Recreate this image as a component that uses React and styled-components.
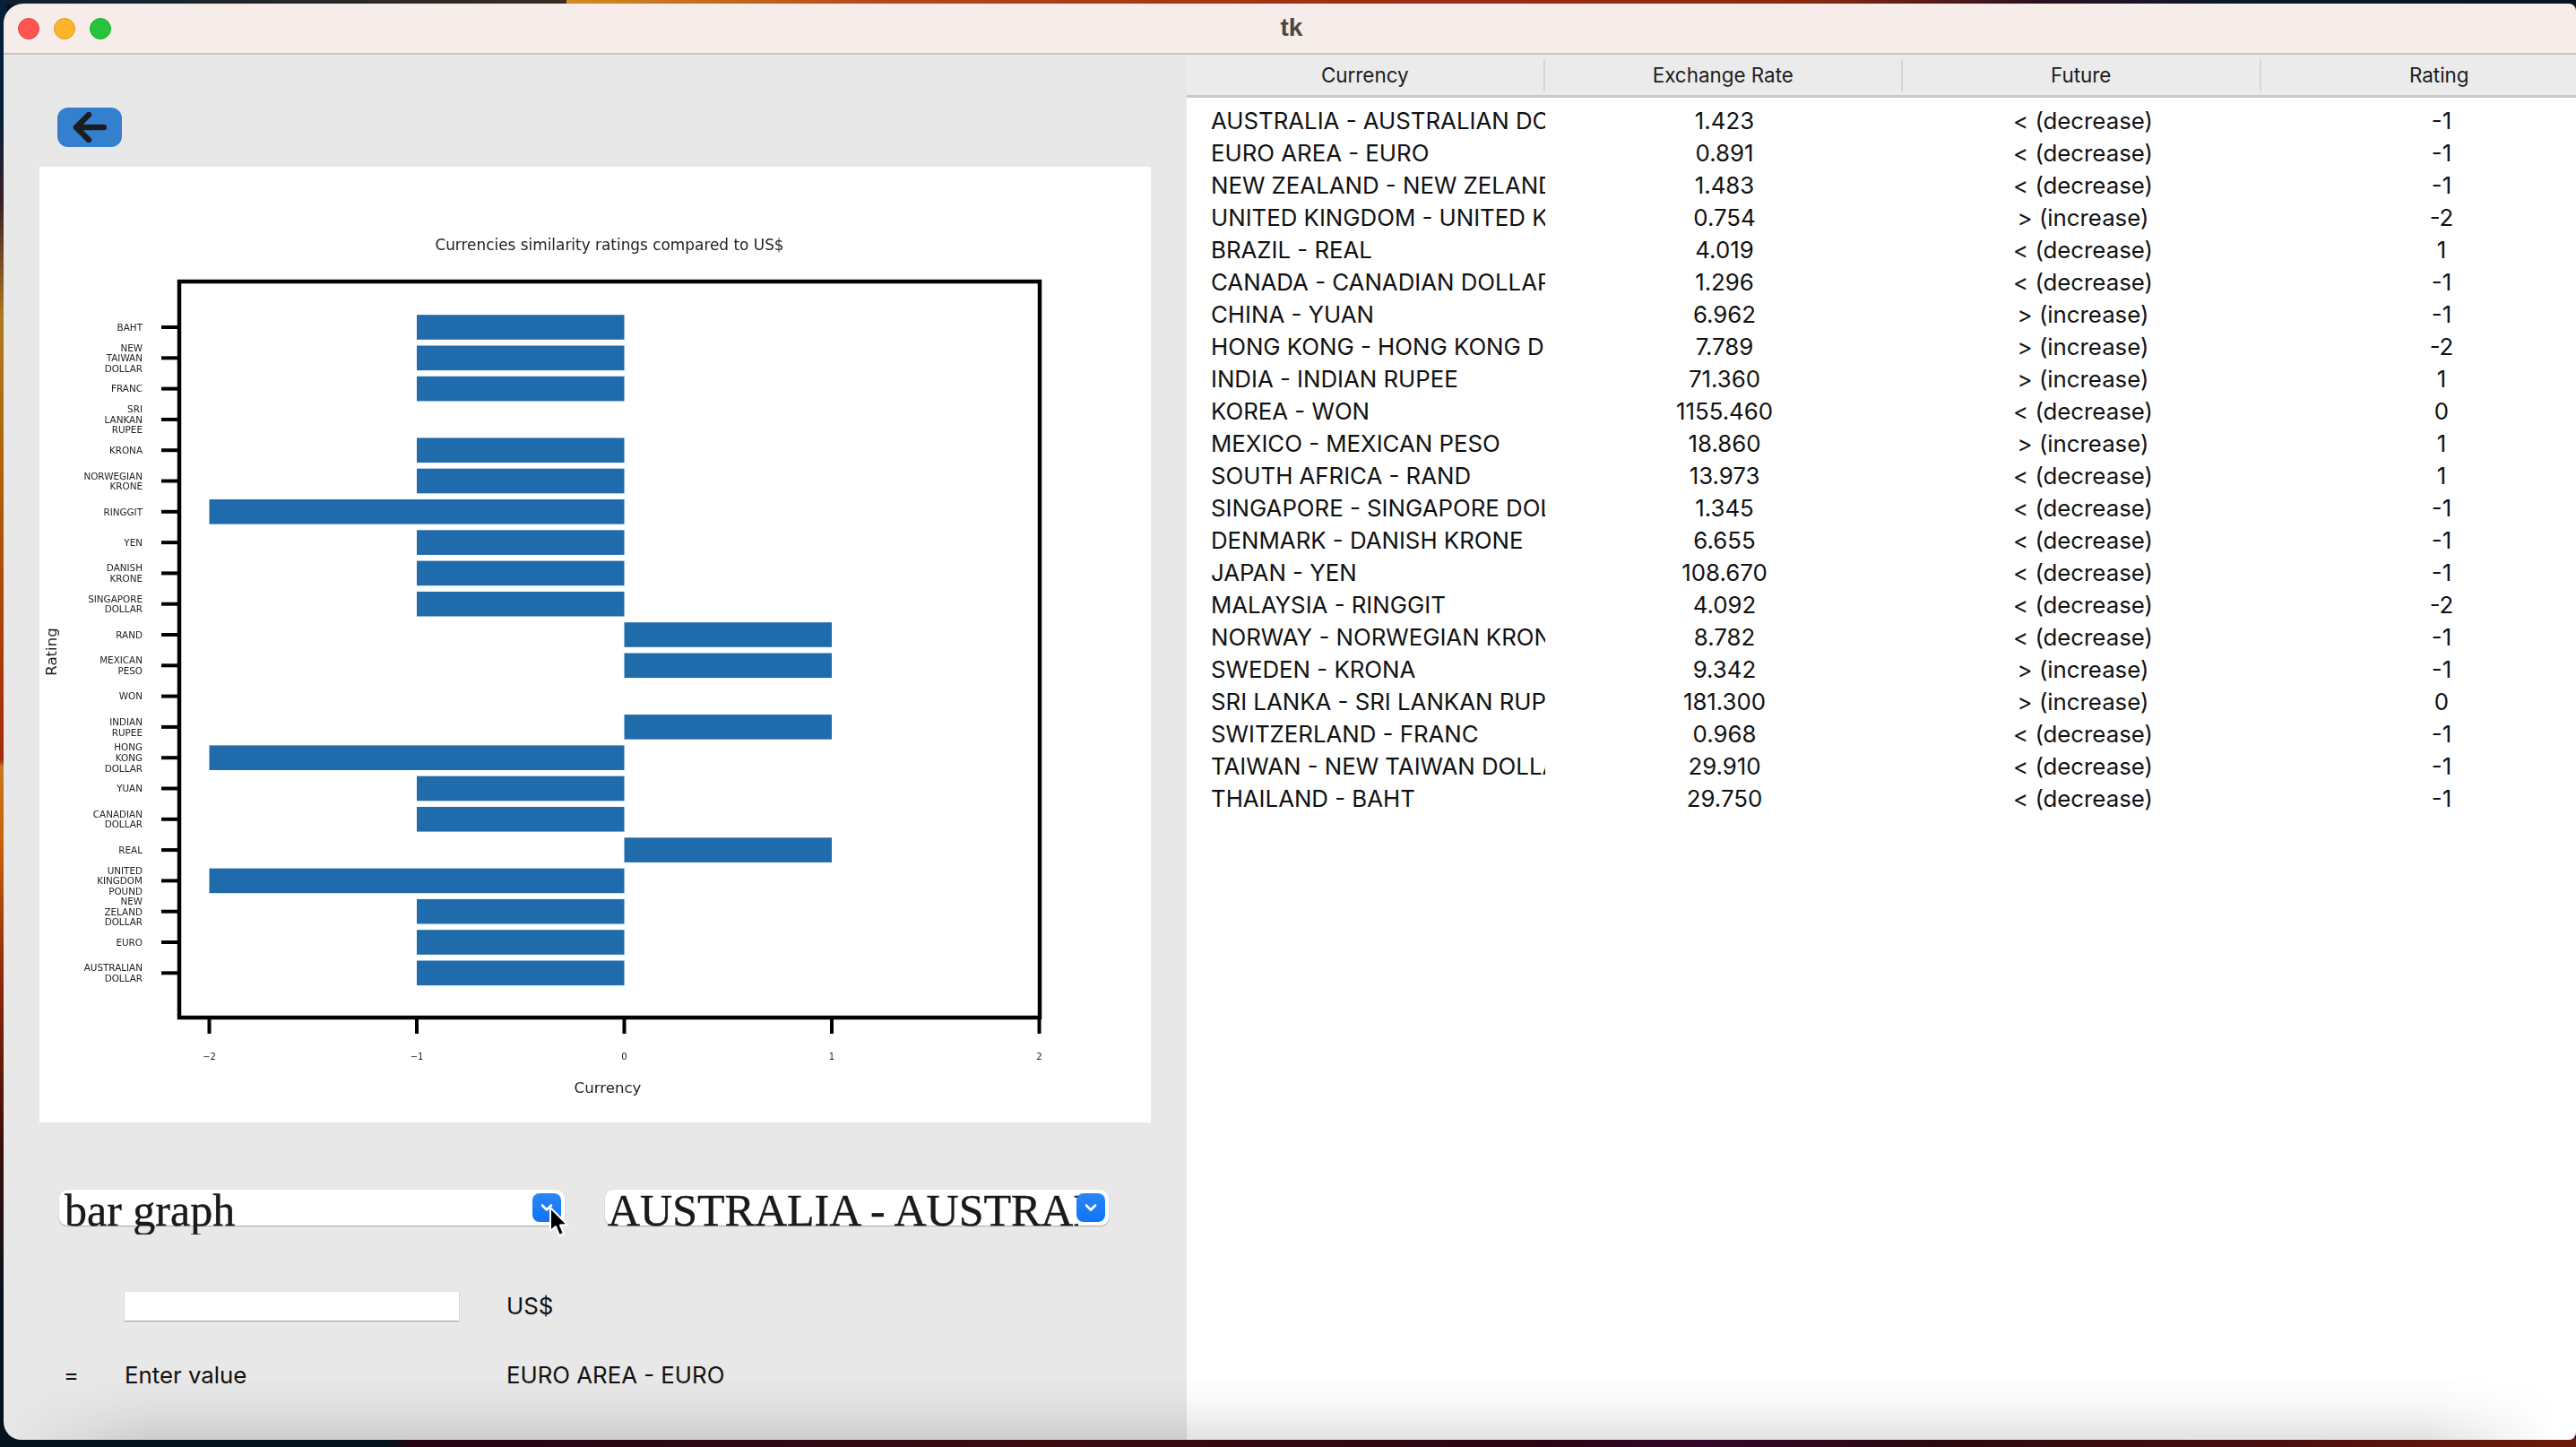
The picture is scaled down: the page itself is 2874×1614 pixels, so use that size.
import React from "react";
import styled, { createGlobalStyle } from "styled-components";

const Global = createGlobalStyle`
  html, body { margin: 0; padding: 0; width: 2874px; height: 1614px; overflow: hidden; }
  * { box-sizing: border-box; }
`;

const Desktop = styled.div`
  width: 2874px;
  height: 1614px;
  padding: 4px 0 8px 4px;
  background-color: #03141f;
  background-image:
    linear-gradient(90deg, #0c2030 0, #3a2b22 22%, #3a2b22 21.9%, #d28a22 22%, #b4481a 34%, #a02e12 52%, #8a2a12 70%, #2c1020 79%, #06182a 88%, #04141f 100%),
    linear-gradient(90deg, #03121b 0, #03121b 15%, #260412 16%, #2e0a16 30%, #3c0c12 40%, #2a0614 60%, #34082a 66%, #2a0a10 75%, #4a0e10 88%, #6e1c0a 100%),
    linear-gradient(180deg, #04203a 0, #06203a 8%, #3a2028 14%, #b07a20 22%, #b06408 32%, #a83008 50%, #a02c08 52.5%, #c87820 53%, #c86408 58%, #8c2808 68%, #3c0e0c 79%, #04141e 90%, #04141e 100%);
  background-size: 100% 5px, 100% 10px, 8px 100%;
  background-position: top left, bottom left, top left;
  background-repeat: no-repeat;
`;

const Window = styled.div`
  position: relative;
  width: 2870px;
  height: 1602px;
  display: flex;
  flex-direction: column;
  overflow: hidden;
  border-radius: 22px 8px 8px 20px;
  font-family: Inter, "Liberation Sans", Arial, sans-serif;
  color: #111;
`;

const TitleBar = styled.header`
  position: relative;
  flex: 0 0 57px;
  display: flex;
  align-items: center;
  justify-content: center;
  padding-bottom: 2px;
  background: #f6edeb;
  border-bottom: 2px solid #c6c4c3;
`;

const Lights = styled.div`
  position: absolute;
  left: 16px;
  top: 16px;
  display: flex;
  gap: 16px;
`;

const Light = styled.span`
  width: 24px;
  height: 24px;
  border-radius: 50%;
  background: ${(p) => p.$fill};
  border: 1px solid ${(p) => p.$edge};
`;

const Title = styled.span`
  margin-left: 4px;
  font-family: "Liberation Sans", Arial, sans-serif;
  font-size: 28px;
  font-weight: 700;
  color: #4a4644;
`;

const Body = styled.main`
  flex: 1;
  display: flex;
  min-height: 0;
`;

const LeftPanel = styled.section`
  flex: 0 0 1320px;
  background: #e8e8e8;
  display: flex;
  flex-direction: column;
`;

const BackButton = styled.button`
  width: 72px;
  height: 44px;
  margin: 59px 0 0 60px;
  padding: 0;
  border: 0;
  border-radius: 12px;
  background: #3480cf;
  display: flex;
  align-items: center;
  justify-content: center;
`;

const ChartFrame = styled.div`
  width: 1240px;
  height: 1066px;
  margin: 22px 0 0 40px;
  background: #fff;
`;

const ChartSvg = styled.svg`
  display: block;
  filter: blur(0.55px);
  font-family: "DejaVu Sans", sans-serif;
`;

const SelectRow = styled.div`
  display: flex;
  gap: 45px;
  margin: 75px 0 0 62px;
`;

const Select = styled.div`
  position: relative;
  width: ${(p) => p.$w}px;
  height: 40px;
  padding-left: ${(p) => p.$pad}px;
  background: #fff;
  border-radius: 9px;
  box-shadow: 0 1px 1px #a8a8a8, 0 0 1px #bbb;
`;

const SelectText = styled.div`
  width: ${(p) => p.$w}px;
  height: 50px;
  overflow: hidden;
  white-space: nowrap;
  font-family: "Liberation Serif", "Times New Roman", serif;
  font-size: 50px;
  line-height: 46px;
  color: #1a1a1a;
  -webkit-text-stroke: 0.4px #1a1a1a;
`;

const SelectArrow = styled.span`
  position: absolute;
  right: 4px;
  top: 4px;
  width: 32px;
  height: 32px;
  border-radius: 8px;
  background: linear-gradient(180deg, #2a86f8, #0f74f6);
  display: flex;
  align-items: center;
  justify-content: center;
`;

const Cursor = styled.svg`
  position: absolute;
  left: 545px;
  top: 18px;
`;

const FormRow = styled.div`
  display: grid;
  grid-template-columns: 68px 426px 1fr;
  align-items: center;
  margin-left: 67px;
  margin-top: ${(p) => p.$top}px;
  font-size: 25.8px;
  line-height: 32px;
`;

const TextInput = styled.div`
  width: 373px;
  height: 32px;
  background: #fff;
  box-shadow: 0 1px 1px #a8a8a8, 0 0 1px #ccc;
`;

const RightPanel = styled.section`
  flex: 1;
  min-width: 0;
  background: #fff;
  overflow: hidden;
`;

const HeaderRow = styled.div`
  display: flex;
  height: 48px;
  background: #ebebeb;
  border-bottom: 3px solid #c8c8c8;
  align-items: center;
`;

const HeaderCell = styled.div`
  flex: 0 0 399.5px;
  height: 36px;
  line-height: 36px;
  text-align: center;
  font-size: 22.4px;
  color: #1c1c1c;
  border-right: 2px solid #d6d6d6;
`;

const Rows = styled.div`
  padding-top: 8px;
`;

const Row = styled.div`
  display: flex;
  height: 36px;
  line-height: 36px;
  font-size: 25.8px;
  color: #111;
`;

const NameCell = styled.div`
  flex: 0 0 400px;
  padding-left: 27px;
  overflow: hidden;
  white-space: nowrap;
`;

const ValueCell = styled.div`
  flex: 0 0 400px;
  text-align: center;
`;

const BottomShade = styled.div`
  position: absolute;
  left: 0;
  right: 0;
  bottom: 0;
  height: 70px;
  pointer-events: none;
  background: linear-gradient(180deg, rgba(0,0,0,0) 0, rgba(0,0,0,0.03) 45%, rgba(0,0,0,0.115) 100%);
  -webkit-mask-image: linear-gradient(90deg, transparent 0, #000 170px, #000 2700px, transparent 2850px);
  mask-image: linear-gradient(90deg, transparent 0, #000 170px, #000 2700px, transparent 2850px);
`;

const table = [
  ["AUSTRALIA - AUSTRALIAN DOLLAR", "1.423", "<", -1],
  ["EURO AREA - EURO", "0.891", "<", -1],
  ["NEW ZEALAND - NEW ZELAND DOLLAR", "1.483", "<", -1],
  ["UNITED KINGDOM - UNITED KINGDOM POUND", "0.754", ">", -2],
  ["BRAZIL - REAL", "4.019", "<", 1],
  ["CANADA - CANADIAN DOLLAR", "1.296", "<", -1],
  ["CHINA - YUAN", "6.962", ">", -1],
  ["HONG KONG - HONG KONG DOLLAR", "7.789", ">", -2],
  ["INDIA - INDIAN RUPEE", "71.360", ">", 1],
  ["KOREA - WON", "1155.460", "<", 0],
  ["MEXICO - MEXICAN PESO", "18.860", ">", 1],
  ["SOUTH AFRICA - RAND", "13.973", "<", 1],
  ["SINGAPORE - SINGAPORE DOLLAR", "1.345", "<", -1],
  ["DENMARK - DANISH KRONE", "6.655", "<", -1],
  ["JAPAN - YEN", "108.670", "<", -1],
  ["MALAYSIA - RINGGIT", "4.092", "<", -2],
  ["NORWAY - NORWEGIAN KRONE", "8.782", "<", -1],
  ["SWEDEN - KRONA", "9.342", ">", -1],
  ["SRI LANKA - SRI LANKAN RUPEE", "181.300", ">", 0],
  ["SWITZERLAND - FRANC", "0.968", "<", -1],
  ["TAIWAN - NEW TAIWAN DOLLAR", "29.910", "<", -1],
  ["THAILAND - BAHT", "29.750", "<", -1],
];

const bars = [
  [["BAHT"], -1],
  [["NEW", "TAIWAN", "DOLLAR"], -1],
  [["FRANC"], -1],
  [["SRI", "LANKAN", "RUPEE"], 0],
  [["KRONA"], -1],
  [["NORWEGIAN", "KRONE"], -1],
  [["RINGGIT"], -2],
  [["YEN"], -1],
  [["DANISH", "KRONE"], -1],
  [["SINGAPORE", "DOLLAR"], -1],
  [["RAND"], 1],
  [["MEXICAN", "PESO"], 1],
  [["WON"], 0],
  [["INDIAN", "RUPEE"], 1],
  [["HONG", "KONG", "DOLLAR"], -2],
  [["YUAN"], -1],
  [["CANADIAN", "DOLLAR"], -1],
  [["REAL"], 1],
  [["UNITED", "KINGDOM", "POUND"], -2],
  [["NEW", "ZELAND", "DOLLAR"], -1],
  [["EURO"], -1],
  [["AUSTRALIAN", "DOLLAR"], -1],
];

const X0 = 652.5;
const STEP = 231.5;
const rowY = (i) => 179 + 34.3 * i;

function Chart() {
  return (
    <ChartSvg width="1240" height="1066" viewBox="0 0 1240 1066">
      <text x="636" y="93" textAnchor="middle" fontSize="16.9" fill="#222">
        Currencies similarity ratings compared to US$
      </text>
      {bars.map(([, v], i) =>
        v === 0 ? null : (
          <rect
            key={i}
            x={v < 0 ? X0 + v * STEP : X0}
            y={rowY(i) - 13.8}
            width={Math.abs(v) * STEP}
            height={27.6}
            fill="#1f6bab"
          />
        )
      )}
      <rect x="156" y="128" width="960" height="821" fill="none" stroke="#000" strokeWidth="4.5" />
      {bars.map(([lines], i) => {
        const y = rowY(i);
        const start = y + 3.8 - ((lines.length - 1) * 11.6) / 2;
        return (
          <g key={i}>
            <line x1="136" x2="156" y1={y} y2={y} stroke="#000" strokeWidth="4" />
            {lines.map((l, k) => (
              <text key={k} x="115" y={start + k * 11.6} textAnchor="end" fontSize="10.4" fill="#222">
                {l}
              </text>
            ))}
          </g>
        );
      })}
      {[-2, -1, 0, 1, 2].map((t) => (
        <g key={t}>
          <line x1={X0 + t * STEP} x2={X0 + t * STEP} y1="949" y2="967" stroke="#000" strokeWidth="4" />
          <text x={X0 + t * STEP} y="996" textAnchor="middle" fontSize="10" fill="#222">
            {t < 0 ? `\u2212${-t}` : t}
          </text>
        </g>
      ))}
      <text x="634" y="1033" textAnchor="middle" fontSize="16.6" fill="#222">Currency</text>
      <text transform="translate(19 541) rotate(-90)" textAnchor="middle" fontSize="16.6" fill="#222">Rating</text>
    </ChartSvg>
  );
}

const Chevron = () => (
  <svg width="16" height="12" viewBox="0 0 16 12">
    <path d="M3 3.5 L8 8.5 L13 3.5" fill="none" stroke="#fff" strokeWidth="2.6" strokeLinecap="round" strokeLinejoin="round" />
  </svg>
);

export default function App() {
  return (
    <Desktop>
      <Global />
      <Window>
        <TitleBar>
          <Lights>
            <Light $fill="#fe5550" $edge="#e0443e" />
            <Light $fill="#fdb42a" $edge="#dd9a1e" />
            <Light $fill="#26c33c" $edge="#1fab30" />
          </Lights>
          <Title>tk</Title>
        </TitleBar>
        <Body>
          <LeftPanel>
            <BackButton aria-label="Back">
              <svg width="38" height="34" viewBox="0 0 38 34">
                <path d="M18 3 L4 17 L18 31 M4 17 L35 17" fill="none" stroke="#1d1d1f" strokeWidth="6.5" strokeLinecap="round" strokeLinejoin="round" />
              </svg>
            </BackButton>
            <ChartFrame>
              <Chart />
            </ChartFrame>
            <SelectRow>
              <Select $w={564} $pad={6}>
                <SelectText $w={520}>bar graph</SelectText>
                <SelectArrow><Chevron /></SelectArrow>
                <Cursor width="24" height="36" viewBox="0 0 24 36">
                  <path d="M3 2 L3 28 L9 23 L13 33 L18 31 L14 21.5 L22 21 Z" fill="#000" stroke="#fff" strokeWidth="2" strokeLinejoin="round" />
                </Cursor>
              </Select>
              <Select $w={562} $pad={3}>
                <SelectText $w={525}>AUSTRALIA - AUSTRALIAN DOLLAR</SelectText>
                <SelectArrow><Chevron /></SelectArrow>
              </Select>
            </SelectRow>
            <FormRow $top={74}>
              <span />
              <TextInput />
              <span>US$</span>
            </FormRow>
            <FormRow $top={45}>
              <span>=</span>
              <span>Enter value</span>
              <span>EURO AREA - EURO</span>
            </FormRow>
          </LeftPanel>
          <RightPanel>
            <HeaderRow>
              <HeaderCell>Currency</HeaderCell>
              <HeaderCell>Exchange Rate</HeaderCell>
              <HeaderCell>Future</HeaderCell>
              <HeaderCell>Rating</HeaderCell>
            </HeaderRow>
            <Rows>
              {table.map(([name, rate, dir, rating]) => (
                <Row key={name}>
                  <NameCell>{name}</NameCell>
                  <ValueCell>{rate}</ValueCell>
                  <ValueCell>{dir === "<" ? "< (decrease)" : "> (increase)"}</ValueCell>
                  <ValueCell>{rating}</ValueCell>
                </Row>
              ))}
            </Rows>
          </RightPanel>
        </Body>
        <BottomShade />
      </Window>
    </Desktop>
  );
}
